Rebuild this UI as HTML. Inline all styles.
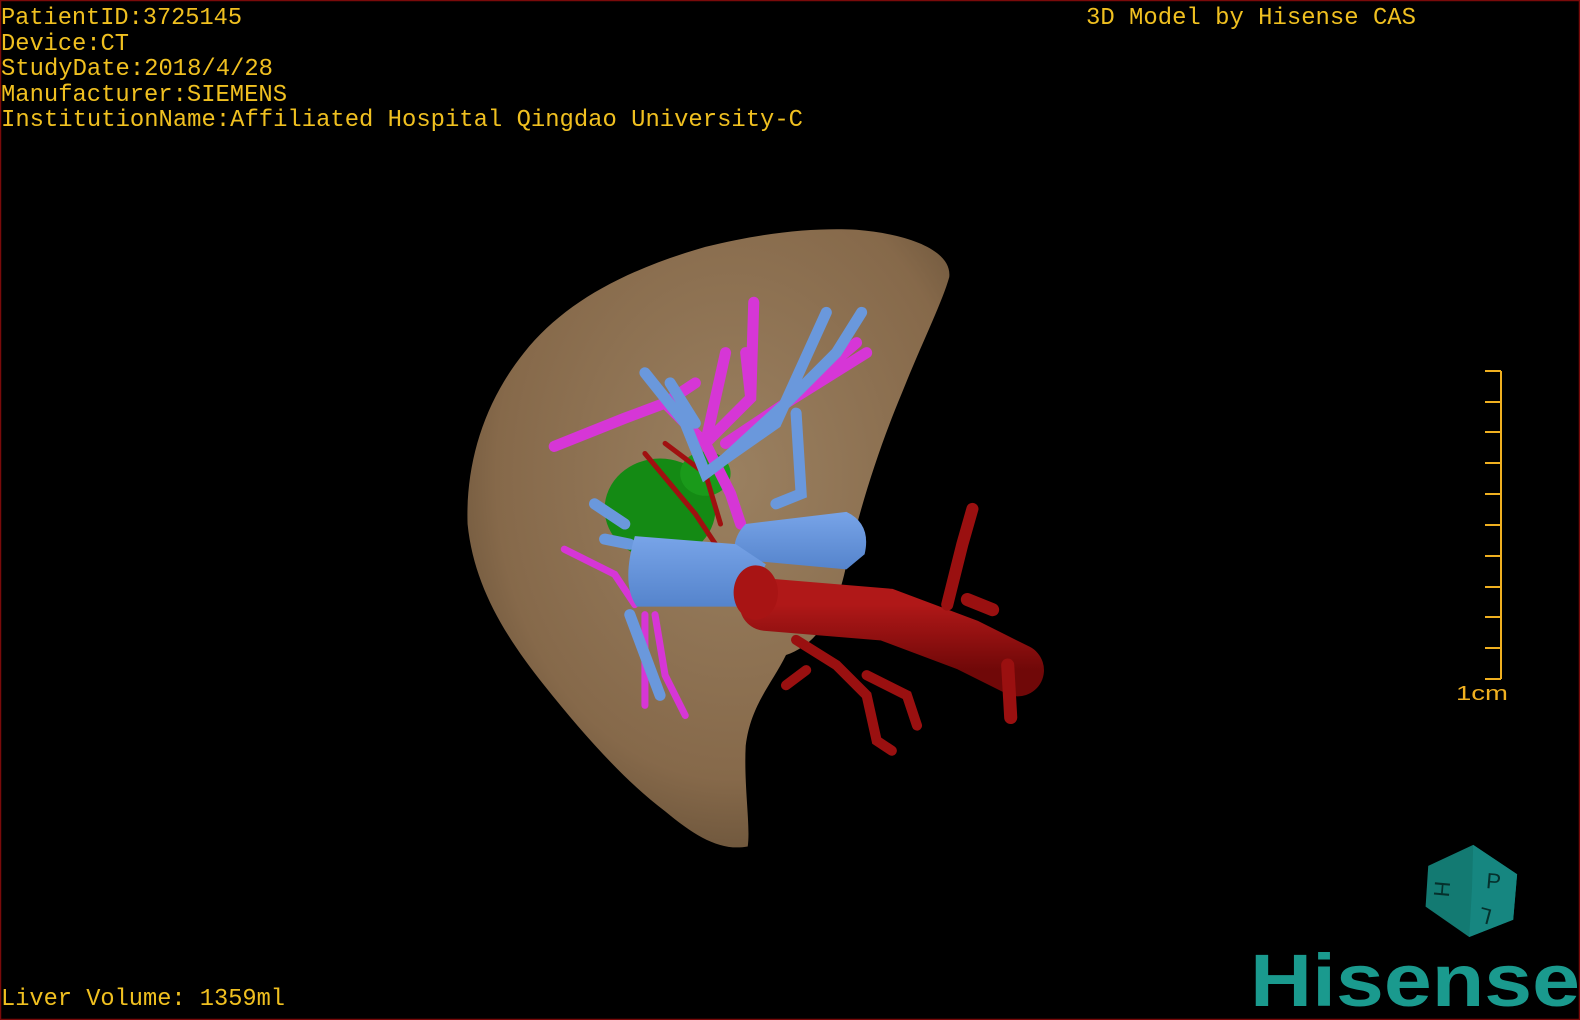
<!DOCTYPE html>
<html><head><meta charset="utf-8"><style>
html,body{margin:0;padding:0;background:#000;width:1580px;height:1020px;overflow:hidden}
svg{display:block}
.t{font-family:"Liberation Mono",monospace;fill:#f0c020;font-size:24px}
</style></head><body>
<svg width="1580" height="1020" viewBox="0 0 1580 1020" xmlns="http://www.w3.org/2000/svg">
<defs>
<radialGradient id="lv" cx="0.55" cy="0.4" r="0.7">
<stop offset="0" stop-color="#9a8060"/><stop offset="0.7" stop-color="#86694a"/><stop offset="1" stop-color="#5e4a33"/>
</radialGradient>
<linearGradient id="rd" x1="0" y1="0" x2="0" y2="1"><stop offset="0" stop-color="#b01818"/><stop offset="1" stop-color="#700808"/></linearGradient>
<linearGradient id="bl" x1="0" y1="0" x2="0" y2="1"><stop offset="0" stop-color="#78a4e8"/><stop offset="1" stop-color="#5584cc"/></linearGradient>
</defs>
<rect x="0.5" y="0.5" width="1579" height="1019" fill="#000" stroke="#7a0a0a" stroke-width="1.5"/>
<text class="t" x="1" y="24" textLength="241" lengthAdjust="spacingAndGlyphs">PatientID:3725145</text>
<text class="t" x="1" y="50" textLength="128" lengthAdjust="spacingAndGlyphs">Device:CT</text>
<text class="t" x="1" y="75" textLength="272" lengthAdjust="spacingAndGlyphs">StudyDate:2018/4/28</text>
<text class="t" x="1" y="101" textLength="286" lengthAdjust="spacingAndGlyphs">Manufacturer:SIEMENS</text>
<text class="t" x="1" y="126" textLength="802" lengthAdjust="spacingAndGlyphs">InstitutionName:Affiliated Hospital Qingdao University-C</text>
<text class="t" x="1086" y="24" textLength="330" lengthAdjust="spacingAndGlyphs">3D Model by Hisense CAS</text>
<text class="t" x="1" y="1005" textLength="284" lengthAdjust="spacingAndGlyphs">Liver Volume: 1359ml</text>
<g stroke="#f0b020" stroke-width="2" fill="none">
<line x1="1501" y1="371" x2="1501" y2="679"/>
<line x1="1485" y1="371" x2="1501" y2="371"/><line x1="1485" y1="402" x2="1501" y2="402"/><line x1="1485" y1="432" x2="1501" y2="432"/><line x1="1485" y1="463" x2="1501" y2="463"/><line x1="1485" y1="494" x2="1501" y2="494"/><line x1="1485" y1="525" x2="1501" y2="525"/><line x1="1485" y1="556" x2="1501" y2="556"/><line x1="1485" y1="587" x2="1501" y2="587"/><line x1="1485" y1="617" x2="1501" y2="617"/><line x1="1485" y1="648" x2="1501" y2="648"/><line x1="1485" y1="679" x2="1501" y2="679"/>
</g>
<text x="1456" y="700" font-family="Liberation Sans,sans-serif" font-size="20" fill="#f0b020" textLength="52" lengthAdjust="spacingAndGlyphs">1cm</text>
<g transform="scale(1.0077)">
<path d="M850,228 C900,232 945,248 942,275 C935,300 915,340 895,390 C870,450 855,500 840,560 C830,610 810,640 780,650 C765,680 745,700 740,740 C738,780 745,820 742,840 C715,845 690,830 660,805 C620,775 580,730 540,680 C500,630 470,580 464,520 C462,460 480,400 520,350 C560,300 620,268 700,245 C760,230 810,226 850,228 Z" fill="url(#lv)"/>
<ellipse cx="655" cy="505" rx="55" ry="50" fill="#148a14"/>
<ellipse cx="700" cy="470" rx="25" ry="22" fill="#1a9a1a"/>
<g fill="none" stroke-linecap="round">
<path d="M640,450 L690,510 L720,555 M660,440 L700,470 L715,520" stroke="#a01010" stroke-width="5"/>
<path d="M550,443 L620,415 L660,400 L700,440 L725,490 L735,520 M660,400 L690,380 M700,440 L745,395 L748,300 M745,395 L740,350 M720,440 L780,400 L860,350 M780,400 L850,340 M700,440 L720,350" stroke="#d636d6" stroke-width="11"/>
<path d="M560,545 L610,570 L630,600 M650,610 L660,670 L680,710 M640,610 L640,700" stroke="#d636d6" stroke-width="7"/>
<path d="M640,370 L680,420 L700,470 L720,455 L780,400 L830,350 L855,310 M720,455 L770,420 L820,310 M790,410 L795,490 L770,500 M590,500 L620,520 M600,535 L625,540 M625,610 L640,650 L655,690 M665,380 L690,420" stroke="#6a98dc" stroke-width="11"/>
</g>
<path d="M740,520 L840,508 Q865,520 858,550 L840,565 L730,555 Q725,535 740,520 Z" fill="url(#bl)"/>
<path d="M630,532 L730,540 L760,560 L740,602 L632,602 Q616,580 630,532 Z" fill="url(#bl)"/>
<g fill="none" stroke="#9a1010" stroke-linecap="round">
<path d="M760,600 L880,610 L960,640 L1010,665" stroke="url(#rd)" stroke-width="52"/>
<path d="M940,600 L955,540 L965,505" stroke-width="12"/>
<path d="M790,635 L830,660 L860,690 L870,735 L885,745 M800,665 L780,680 M860,670 L900,690 L910,720" stroke-width="10"/>
<path d="M960,595 L985,605 M1000,660 L1003,712" stroke-width="13"/>
</g>
<ellipse cx="750" cy="588" rx="22" ry="27" fill="#a81414"/>
</g>
<g transform="translate(1472,888) rotate(15)">
<path d="M-48,-10 L-10,-42 L40,-25 L48,20 L10,48 L-40,30 Z" fill="#137a72"/>
<path d="M-10,-42 L40,-25 L48,20 L10,48 L0,0 Z" fill="#168680"/>
<text x="-34" y="12" font-family="Liberation Sans,sans-serif" font-size="22" fill="#05302c" transform="rotate(80,-30,5)">H</text>
<text x="12" y="-4" font-family="Liberation Sans,sans-serif" font-size="22" fill="#05302c" transform="rotate(-10,15,-10)">P</text>
<text x="14" y="32" font-family="Liberation Sans,sans-serif" font-size="22" fill="#05302c" transform="rotate(180,20,24)">L</text>
</g>
<text x="1250" y="1006" font-family="Liberation Sans,sans-serif" font-weight="bold" font-size="74" fill="#1a9a8e" textLength="330" lengthAdjust="spacingAndGlyphs">Hisense</text>
</svg>
</body></html>
